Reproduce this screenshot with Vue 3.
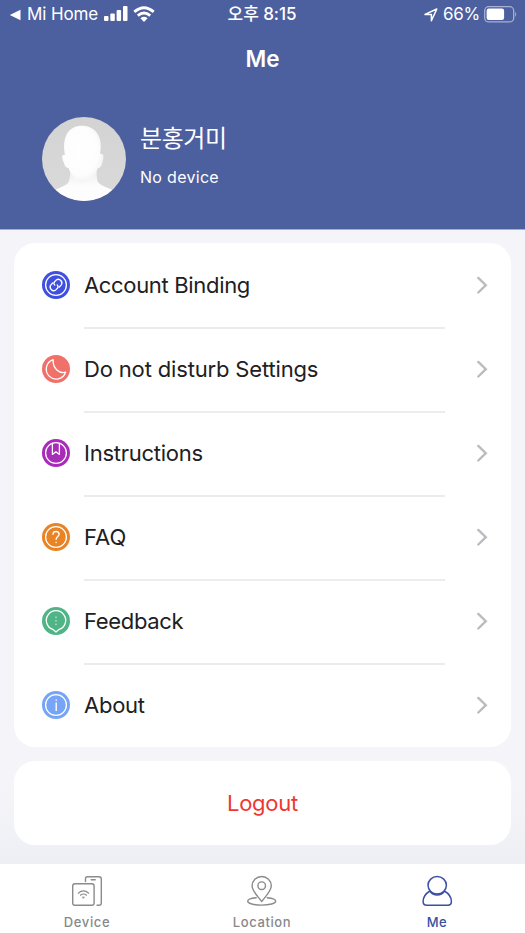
<script setup>
const items = [
  { label: 'Account Binding', icon: 'link', color: '#3f4fe0' },
  { label: 'Do not disturb Settings', icon: 'moon', color: '#f0706a' },
  { label: 'Instructions', icon: 'book', color: '#a92bb9' },
  { label: 'FAQ', icon: 'help', color: '#e98324' },
  { label: 'Feedback', icon: 'chat', color: '#50b586' },
  { label: 'About', icon: 'info', color: '#76a5f7' },
]
</script>

<template>
  <div class="screen">
    <header class="header">
      <div class="status">
        <div class="status-left">
          <svg class="back" width="12" height="12" viewBox="0 0 12 12"><path d="M.8 6 11.500 .7v10.600z" fill="#fff" /></svg>
          <span class="carrier">Mi Home</span>
          <svg class="signal" width="24" height="16" viewBox="0 0 24 16" fill="#fff">
            <rect x="0" y="10" width="4.500" height="5" rx="1" />
            <rect x="6.300" y="7.500" width="4.500" height="7.500" rx="1" />
            <rect x="12.600" y="4" width="4.500" height="11" rx="1" />
            <rect x="19" y="0" width="4.500" height="15" rx="1" />
          </svg>
          <svg class="wifi" width="22" height="16" viewBox="0 0 22 16" fill="none" stroke="#fff" stroke-width="2.900">
            <path d="M1.300 5.900Q11-2.500 20.700 5.900" />
            <path d="M4.800 9.700Q11 4.400 17.200 9.700" />
            <path d="M7.400 12.200Q11 9.400 14.600 12.200L11 15.900z" fill="#fff" stroke="none" />
          </svg>
        </div>
        <span class="time">오후 8:15</span>
        <div class="status-right">
          <svg class="arrow" width="14" height="14" viewBox="0 0 14 14" fill="none" stroke="#fff" stroke-width="1.500" stroke-linejoin="round"><path d="M1 6.400 12.800 1 7.400 12.700V6.500z" /></svg>
          <span class="percent">66%</span>
          <svg class="battery" width="33" height="17" viewBox="0 0 33 17">
            <rect x=".7" y=".7" width="29" height="15.200" rx="4" fill="none" stroke="#a7b1d4" stroke-width="1.300" />
            <rect x="2.600" y="2.600" width="17.500" height="11.400" rx="2.200" fill="#fff" />
            <path d="M31.200 5.700q2 2.600 0 5.200z" fill="#a7b1d4" />
          </svg>
        </div>
      </div>
      <h1 class="title">Me</h1>
      <div class="profile">
        <svg class="avatar" width="84" height="84" viewBox="0 0 84 84">
          <defs>
            <linearGradient id="bg" x1="0" y1="0" x2="0" y2="1"><stop offset="0" stop-color="#d3d3d3" /><stop offset="1" stop-color="#dadada" /></linearGradient>
            <radialGradient id="face" cx=".45" cy=".45" r=".65"><stop offset="0" stop-color="#fff" /><stop offset=".65" stop-color="#fdfdfd" /><stop offset="1" stop-color="#eeeeee" /></radialGradient>
            <linearGradient id="body" x1="0" y1="0" x2="0" y2="1"><stop offset="0" stop-color="#ececec" /><stop offset=".6" stop-color="#fdfdfd" /></linearGradient>
            <clipPath id="round"><circle cx="42" cy="42" r="42" /></clipPath>
          </defs>
          <g clip-path="url(#round)">
            <rect width="84" height="84" fill="url(#bg)" />
            <path d="M28 50q1 14-3 17-3 2-10 5L9 75v9h66V75l-9-4q-8-3-10-6-2-4-1-15z" fill="url(#body)" />
            <path d="M23 38C19.500 19 27 8.700 40 8.700S61.500 19 58 37c4-1 4 3 2.500 8-1 4-2 6-4.500 6C53.500 58 46 65 40.500 65S29 58 26.500 51c-3 0-4-3-5-6-2-5-2-8 1.500-7z" fill="url(#face)" />
          </g>
        </svg>
        <div class="who">
          <div class="name">분홍거미</div>
          <div class="devices">No device</div>
        </div>
      </div>
    </header>

    <main class="content">
      <ul class="card menu">
        <li v-for="item in items" :key="item.label" class="row">
          <svg class="icon" width="28" height="28" viewBox="0 0 28 28" fill="none" stroke="#fff" stroke-width="1.300" stroke-linecap="round" stroke-linejoin="round">
            <circle cx="14" cy="14" r="14" :fill="item.color" stroke="none" />
            <template v-if="item.icon === 'link'">
              <circle cx="14" cy="14" r="10.400" />
              <path d="M10.700 12L8.900 13.900C6.500 16.900 10.400 21.500 13.800 18.900L15.400 17.300C16.400 16.200 16.100 14.800 15.200 13.900" />
              <path d="M17.300 16L19.100 14.100C21.500 11.100 17.600 6.500 14.200 9.100L12.600 10.700C11.600 11.800 11.900 13.200 12.800 14.100" />
            </template>
            <path v-else-if="item.icon === 'moon'" d="M11.200 4.700A9.900 9.900 0 1 0 23.600 17.200C17.500 19 10.500 13.500 11.200 4.700Z" />
            <template v-else-if="item.icon === 'book'">
              <circle cx="14" cy="14" r="10.400" />
              <path d="M10.400 5V15.400L13.900 12.800 17.400 15.400V5" />
            </template>
            <template v-else-if="item.icon === 'help'">
              <circle cx="14" cy="14" r="10.400" />
              <path d="M11 11.300C11.200 7.300 17.100 7.800 17.100 11.200C17.100 13.400 14.100 13.500 14.100 16.300M14.100 19.300V19.500" stroke-width="1.400" />
            </template>
            <template v-else-if="item.icon === 'chat'">
              <path d="M14 25L11.300 22.700A9.700 9.700 0 1 1 16.700 22.700Z" />
              <path d="M14 10.200V10.300M14 13.700V13.800M14 17.200V17.300" stroke-width="1.200" />
            </template>
            <template v-else>
              <circle cx="14" cy="14" r="10.400" />
              <path d="M14.200 9V9.200M14.200 12V19.400" stroke-width="1.400" />
            </template>
          </svg>
          <span class="label" :class="item.icon">{{ item.label }}</span>
          <svg class="chevron" width="12" height="18" viewBox="0 0 12 18" fill="none" stroke="#bcbcc0" stroke-width="2.400" stroke-linecap="round"><path d="M2.300 1.900 9.800 9.200 2.300 16.500" /></svg>
        </li>
      </ul>
      <button class="card logout"><span>Logout</span></button>
    </main>

    <nav class="tabs">
      <div class="tab">
        <svg width="32" height="32" viewBox="0 0 32 32" fill="none" stroke="#8b8b8e" stroke-width="1.400" stroke-linecap="round">
          <rect x="1.700" y="8.800" width="21.400" height="21.400" rx="2.200" />
          <path d="M14.500 6.500V3.700Q14.500 1.700 16.500 1.700H28Q30.300 1.700 30.300 4V28Q30.300 30.200 28 30.200H26M20.200 4.800H24.200" />
          <path d="M7.300 18.200Q12.500 13.700 17.700 18.200M9.500 20.200Q12.500 17.800 15.500 20.200" stroke-width="1.200" />
          <path d="M11.500 21.900H13.500L12.500 23.300Z" fill="#8b8b8e" stroke-width=".5" />
        </svg>
        <span>Device</span>
      </div>
      <div class="tab">
        <svg width="32" height="32" viewBox="0 0 32 32" fill="none" stroke="#8b8b8e" stroke-width="1.400" stroke-linecap="round" stroke-linejoin="round">
          <path d="M15.700 26.500C11 20.500 6.100 16 6.100 10.800A9.600 9.300 0 0 1 25.300 10.800C25.300 16 20.400 20.500 15.700 26.500Z" />
          <circle cx="15.700" cy="10.700" r="3.800" />
          <path d="M10.200 22.700C5 23.200 1.700 24.600 1.700 26.200C1.700 28.400 8 30.100 15.700 30.100S29.700 28.400 29.700 26.200C29.700 24.600 26.400 23.200 21.200 22.700" />
        </svg>
        <span>Location</span>
      </div>
      <div class="tab active">
        <svg width="32" height="32" viewBox="0 0 32 32" fill="none" stroke="#3a50a2" stroke-width="1.500" stroke-linejoin="round">
          <ellipse cx="16.200" cy="10.300" rx="9.200" ry="8.700" />
          <path d="M8.900 16C4.700 18.600 2.100 22.300 2.100 26.400C2.100 29 3.500 30.200 5.900 30.200H26.700C29.100 30.200 30.400 29 30.400 26.400C30.400 22.300 27.700 18.600 23.500 16C19.900 21.400 12.500 21.400 8.900 16Z" />
        </svg>
        <span>Me</span>
      </div>
    </nav>
  </div>
</template>

<style>
body { margin: 0; background: #f5f5f9; }
</style>

<style scoped>
.screen {
  width: 525px;
  height: 933px;
  display: flex;
  flex-direction: column;
  overflow: hidden;
  background: #f5f5f9;
  font-family: Inter, "Noto Sans CJK KR", sans-serif;
  color: #202022;
}
.header {
  box-sizing: border-box;
  height: 230px;
  background: #4c5f9f;
  border-bottom: 1px solid #a5afce;
  color: #fff;
}
.status {
  display: grid;
  grid-template-columns: 1fr auto 1fr;
  align-items: center;
  height: 28px;
  padding: 0 8px 0 9px;
  font-size: 17px;
  line-height: 28px;
}
.status-left, .status-right { display: flex; align-items: center; height: 28px; }
.status-right { justify-content: flex-end; }
.back { margin: 1px 6px 0 0; }
.carrier { width: 76.5px; white-space: nowrap; letter-spacing: -.1px; }
.wifi { margin-left: 5px; }
.time { padding: 0 2px 0 0; font-weight: 500; letter-spacing: -.05px; }
.arrow { margin-top: 1px; }
.percent { margin-left: 5px; margin-right: 4px; letter-spacing: -.3px; }
.title {
  margin: 16px 0 0;
  height: 30px;
  line-height: 30px;
  text-align: center;
  font-size: 22.5px;
  font-weight: 600;
}
.profile { display: flex; margin: 43px 0 0 42px; gap: 14px; }
.avatar { display: block; }
.name { margin-top: 5px; font-size: 24px; line-height: 34px; font-weight: 400; letter-spacing: -.4px; white-space: nowrap; }
.devices { margin-top: 10px; font-size: 16px; line-height: 22px; letter-spacing: .3px; white-space: nowrap; }
.content { flex: 1; padding: 13px 14px 0; background: linear-gradient(#f5f5f9 0 560px, #eeeff4 634px); }
.card { border-radius: 21px; background: #fff; }
.menu { margin: 0 0 14px; padding: 0; list-style: none; }
.row { display: flex; align-items: center; height: 84px; padding: 0 23px 0 28px; position: relative; }
.row:not(:last-child)::after {
  content: "";
  position: absolute;
  left: 70px;
  right: 66px;
  bottom: -2px;
  height: 2px;
  background: #ececed;
}
.icon { margin-right: 14px; }
.label { flex: 1; font-size: 22px; line-height: 32px; letter-spacing: -.25px; white-space: nowrap; }
.label.link, .label.chat { letter-spacing: -.33px; }
.label.moon { letter-spacing: -.16px; }
.label.help { letter-spacing: 0; }
.logout {
  display: flex;
  align-items: center;
  justify-content: center;
  width: 100%;
  height: 84px;
  padding: 0;
  border: 0;
  color: #ee3733;
  font: 400 22px/32px Inter, sans-serif;
  letter-spacing: -.25px;
}
.tabs { display: grid; grid-template-columns: repeat(3, 1fr); height: 69px; background: #fff; }
.tab {
  display: flex;
  flex-direction: column;
  align-items: center;
  padding: 11px 1px 0 0;
  color: #88888b;
  font-size: 13px;
  font-weight: 500;
  line-height: 18px;
  letter-spacing: .6px;
}
.tab span { margin-top: 6px; }
.active { color: #3a50a2; }
</style>
